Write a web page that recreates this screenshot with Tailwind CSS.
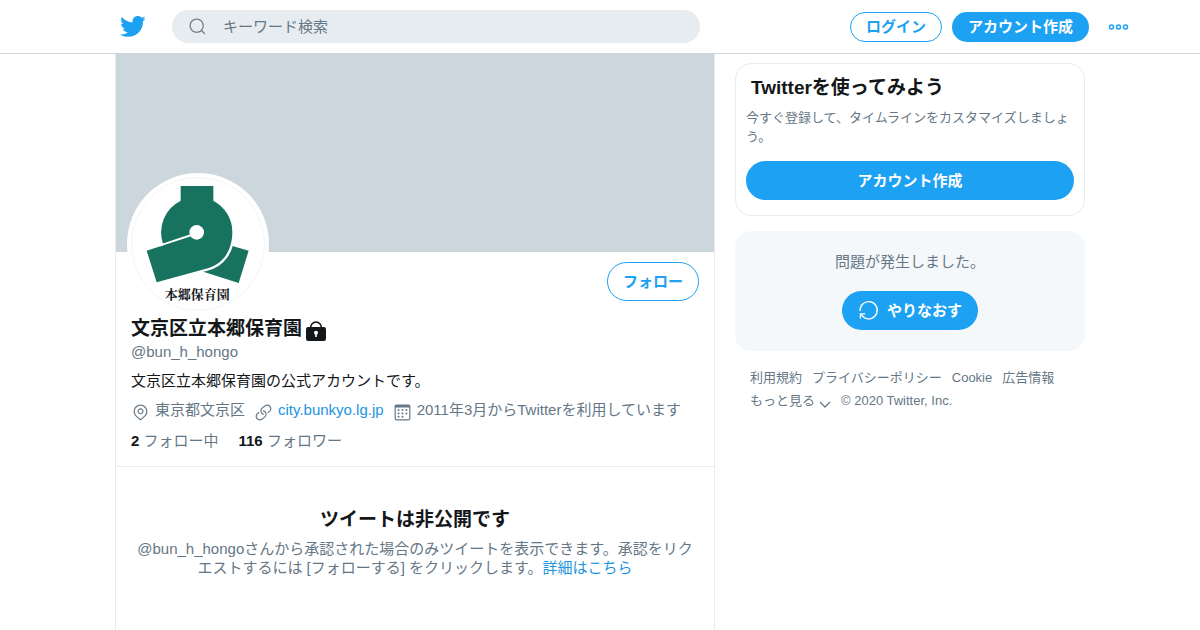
<!DOCTYPE html>
<html lang="ja">
<head>
    <meta charset="UTF-8">
    <meta name="viewport" content="width=device-width, initial-scale=1.0">
    <title>文京区立本郷保育園 (@bun_h_hongo) / Twitter</title>
    <script src="https://cdn.jsdelivr.net/npm/@tailwindcss/browser@4"></script>
</head>
<body class="min-h-screen flex flex-col bg-white text-[#14171a] text-[15px] leading-[19px] font-['Liberation_Sans','Noto_Sans_CJK_JP',sans-serif]">
    <header class="border-b border-[#ccd6dd]">
        <div class="max-w-[970px] h-[53px] mx-auto flex items-center">
            <a href="#" aria-label="Twitter" class="ml-1 mr-[26px] shrink-0">
                <svg class="size-[27px] fill-[#1da1f2]" viewBox="0 0 24 24"><path d="M23.643 4.937c-.835.37-1.732.62-2.675.733.962-.576 1.7-1.49 2.048-2.578-.9.534-1.897.922-2.958 1.13-.85-.904-2.06-1.47-3.4-1.47-2.572 0-4.658 2.086-4.658 4.66 0 .364.042.718.12 1.06-3.873-.195-7.304-2.05-9.602-4.868-.4.69-.63 1.49-.63 2.342 0 1.616.823 3.043 2.072 3.878-.764-.025-1.482-.234-2.11-.583v.06c0 2.257 1.605 4.14 3.737 4.568-.392.106-.803.162-1.227.162-.3 0-.593-.028-.877-.082.593 1.85 2.313 3.198 4.352 3.234-1.595 1.25-3.604 1.995-5.786 1.995-.376 0-.747-.022-1.112-.065 2.062 1.323 4.51 2.093 7.14 2.093 8.57 0 13.255-7.098 13.255-13.254 0-.2-.005-.402-.014-.602.91-.658 1.7-1.477 2.323-2.41z"/></svg>
            </a>
            <label class="flex-1 max-w-[528px] h-[33px] px-4 flex items-center gap-4 rounded-full bg-[#e6ecf0]">
                <svg class="size-[19px] shrink-0 fill-[#657786]" viewBox="0 0 24 24"><path d="M21.53 20.47l-3.66-3.66C19.195 15.24 20 13.214 20 11c0-4.97-4.03-9-9-9s-9 4.03-9 9 4.03 9 9 9c2.215 0 4.24-.804 5.808-2.13l3.66 3.66c.147.146.34.22.53.22s.385-.073.53-.22c.295-.293.295-.767.002-1.06zM3.5 11c0-4.135 3.365-7.5 7.5-7.5s7.5 3.365 7.5 7.5-3.365 7.5-7.5 7.5-7.5-3.365-7.5-7.5z"/></svg>
                <input type="text" aria-label="キーワード検索" placeholder="キーワード検索" class="w-full outline-none placeholder:text-[#657786]">
            </label>
            <div class="ml-auto -mr-11 flex items-center shrink-0">
                <button class="h-[30px] px-[15px] rounded-full border border-[#1da1f2] text-[#1da1f2] font-bold">ログイン</button>
                <button class="h-[30px] ml-[10px] px-4 rounded-full bg-[#1da1f2] text-white font-bold">アカウント作成</button>
                <button aria-label="もっと見る" class="ml-[19px]">
                    <svg class="w-[21px] h-2 fill-none stroke-[#1da1f2]" stroke-width="1.5" viewBox="0 0 21 8"><circle cx="3.5" cy="4" r="2"/><circle cx="10.5" cy="4" r="2"/><circle cx="17.5" cy="4" r="2"/></svg>
                </button>
            </div>
        </div>
    </header>

    <div class="w-full max-w-[970px] mx-auto flex-1 flex gap-5">
        <main class="flex-1 border-x border-[#e6ecf0]">
            <div class="h-[198px] bg-[#ccd6dd]"></div>
            <section class="px-[15px] pb-4 border-b border-[#e6ecf0]">
                <div class="h-[60px] flex items-start justify-between">
                    <svg class="size-[142px] -mt-[79px] -ml-1" viewBox="21 24 426 426" role="img" aria-label="本郷保育園">
                        <circle cx="234" cy="237" r="213" fill="#fff"/>
                        <circle cx="234" cy="237" r="199" fill="none" stroke="#f3f5f6" stroke-width="3"/>
                        <g fill="#17725f">
                            <path d="M325 239L386 257L356 354L243 318Z"/>
                            <path stroke="#fff" stroke-width="14" d="M230 202H337C337 256 309 300 258 311L230 318Z"/>
                            <path d="M129 237A107 107 0 0 1 182 107V63H280V107A107 107 0 0 1 337 202C337 256 309 300 258 311L110 352L80 257L130 241Z"/>
                        </g>
                        <path d="M118 242L215 210" stroke="#fff" stroke-width="6"/>
                        <circle cx="230" cy="202" r="22" fill="#fff"/>
                        <text x="232" y="403" text-anchor="middle" font-size="39" font-weight="700" fill="#14171a" font-family="'Noto Serif CJK JP','Noto Sans CJK JP',serif">本郷保育園</text>
                    </svg>
                    <button class="h-[39px] mt-[10px] px-[15px] rounded-full border border-[#1da1f2] text-[#1da1f2] font-bold">フォロー</button>
                </div>
                <h1 class="h-[30px] pt-1 flex items-center gap-1 text-[19px] leading-6 font-bold">文京区立本郷保育園
                    <svg class="size-[22px] mt-1 -ml-px" viewBox="0 0 22 22"><path d="M5.500 8a5.500 6 0 0 1 11 0" fill="none" stroke="#14171a" stroke-width="1.600"/><rect x="1" y="7" width="20" height="14" rx="2.200" fill="#14171a"/><circle cx="11" cy="12.700" r="2" fill="#fff"/><path d="M10.200 13h1.600v4h-1.600z" fill="#fff"/></svg>
                </h1>
                <p class="text-[#657786]">@bun_h_hongo</p>
                <p class="mt-[10px]">文京区立本郷保育園の公式アカウントです。</p>
                <div class="mt-[10px] flex flex-wrap gap-x-[9px] text-[#657786]">
                    <span class="flex gap-[5px]">
                        <svg class="size-[19px] mt-[3px] fill-current" viewBox="0 0 24 24"><path d="M12 14.315c-2.088 0-3.787-1.698-3.787-3.786S9.913 6.74 12 6.74s3.787 1.7 3.787 3.787-1.7 3.785-3.787 3.785zm0-6.073c-1.26 0-2.287 1.026-2.287 2.287S10.74 12.814 12 12.814s2.287-1.025 2.287-2.286S13.26 8.24 12 8.24z"/><path d="M20.692 10.69C20.692 5.9 16.792 2 12 2s-8.692 3.9-8.692 8.69c0 1.902.603 3.708 1.743 5.223l.003-.002.007.015c1.628 2.07 6.278 5.757 6.475 5.912.138.11.302.163.465.163.163 0 .327-.053.465-.162.197-.155 4.847-3.84 6.475-5.912l.007-.014.002.002c1.14-1.516 1.742-3.32 1.742-5.223zM12 20.29c-1.224-.99-4.52-3.715-5.756-5.285-.94-1.25-1.436-2.742-1.436-4.312C4.808 6.727 8.035 3.5 12 3.5s7.192 3.226 7.192 7.19c0 1.57-.497 3.062-1.436 4.313-1.236 1.57-4.532 4.294-5.756 5.285z"/></svg>
                        東京都文京区
                    </span>
                    <span class="flex gap-[5px]">
                        <svg class="size-[19px] mt-[3px] fill-current" viewBox="0 0 24 24"><path d="M11.96 14.945c-.067 0-.136-.01-.203-.027-1.13-.318-2.097-.986-2.795-1.932-.832-1.125-1.176-2.508-.968-3.893s.942-2.605 2.068-3.438l3.53-2.608c2.322-1.716 5.61-1.224 7.33 1.1.83 1.127 1.175 2.51.967 3.895s-.943 2.605-2.07 3.438l-1.48 1.094c-.333.246-.804.175-1.05-.158-.246-.334-.176-.804.158-1.05l1.48-1.095c.803-.592 1.327-1.463 1.476-2.45.148-.988-.098-1.975-.69-2.778-1.225-1.656-3.572-2.01-5.23-.784l-3.53 2.608c-.802.593-1.326 1.464-1.475 2.45-.15.99.097 1.975.69 2.778.498.675 1.187 1.15 1.992 1.377.4.114.633.528.52.928-.092.33-.394.547-.722.547z"/><path d="M7.27 22.054c-1.61 0-3.197-.735-4.225-2.125-.832-1.127-1.176-2.51-.968-3.894s.943-2.605 2.07-3.438l1.478-1.094c.334-.245.805-.175 1.05.158s.177.804-.157 1.05l-1.48 1.095c-.803.593-1.326 1.464-1.475 2.45-.148.99.097 1.975.69 2.778 1.225 1.657 3.57 2.01 5.23.785l3.528-2.608c1.658-1.225 2.01-3.57.785-5.23-.498-.674-1.187-1.15-1.992-1.376-.4-.113-.633-.527-.52-.927.112-.4.528-.63.926-.522 1.13.318 2.096.986 2.794 1.932 1.717 2.324 1.224 5.612-1.1 7.33l-3.53 2.608c-.933.693-2.023 1.026-3.105 1.026z"/></svg>
                        <a href="#" class="text-[#1b95e0]">city.bunkyo.lg.jp</a>
                    </span>
                    <span class="flex gap-[5px]">
                        <svg class="size-[19px] mt-[3px] fill-current" viewBox="0 0 24 24"><path d="M19.708 2H4.292C3.028 2 2 3.028 2 4.292v15.416C2 20.972 3.028 22 4.292 22h15.416C20.972 22 22 20.972 22 19.708V4.292C22 3.028 20.972 2 19.708 2zm.792 17.708c0 .437-.355.792-.792.792H4.292c-.437 0-.792-.355-.792-.792V6.418c0-.437.354-.79.79-.792h15.42c.436 0 .79.355.79.79V19.71z"/><circle cx="7.032" cy="8.75" r="1.285"/><circle cx="7.032" cy="13.156" r="1.285"/><circle cx="16.97" cy="8.75" r="1.285"/><circle cx="16.97" cy="13.156" r="1.285"/><circle cx="12" cy="8.75" r="1.285"/><circle cx="12" cy="13.156" r="1.285"/><circle cx="7.032" cy="17.486" r="1.285"/><circle cx="12" cy="17.486" r="1.285"/></svg>
                        2011年3月からTwitterを利用しています
                    </span>
                </div>
                <div class="mt-[9px] flex gap-5 text-[#657786]">
                    <a href="#"><b class="text-[#14171a]">2</b> フォロー中</a>
                    <a href="#"><b class="text-[#14171a]">116</b> フォロワー</a>
                </div>
            </section>
            <section class="px-5 pt-[41px] text-center">
                <h2 class="text-[19px] leading-6 font-bold">ツイートは非公開です</h2>
                <p class="mt-[7px] text-[#657786]">@bun_h_hongoさんから承認された場合のみツイートを表示できます。承認をリクエストするには [フォローする] をクリックします。<a href="#" class="text-[#1b95e0]">詳細はこちら</a></p>
            </section>
        </main>

        <aside class="w-[350px] shrink-0 pt-[9px]">
            <section class="px-[10px] pt-3 pb-[15px] rounded-2xl border border-[#e6ecf0]">
                <h2 class="px-[5px] text-[19px] leading-6 font-bold">Twitterを使ってみよう</h2>
                <p class="mt-2 text-[13px] text-[#657786]">今すぐ登録して、タイムラインをカスタマイズしましょう。</p>
                <button class="w-full h-[39px] mt-[15px] rounded-full bg-[#1da1f2] text-white font-bold">アカウント作成</button>
            </section>
            <section class="mt-[15px] py-[21px] flex flex-col items-center gap-5 rounded-2xl bg-[#f5f8fa] text-[#657786]">
                <p>問題が発生しました。</p>
                <button class="h-[39px] px-4 flex items-center gap-2 rounded-full bg-[#1da1f2] text-white font-bold">
                    <svg class="size-[21px] fill-none stroke-white" stroke-width="1.400" viewBox="0 0 22 22"><path d="M2.200 11.500A9 9 0 1 1 6.500 18.400L2.500 15M2.500 19.500V14.500H7.500"/></svg>
                    やりなおす
                </button>
            </section>
            <footer class="px-[15px] pt-[17px] flex flex-wrap gap-x-[10px] gap-y-1 text-[13px] text-[#657786]">
                <a href="#">利用規約</a>
                <a href="#">プライバシーポリシー</a>
                <a href="#">Cookie</a>
                <a href="#">広告情報</a>
                <button class="flex items-center gap-1">もっと見る
                    <svg class="w-3 h-[7px] mt-2 fill-none stroke-current" stroke-width="1.300" viewBox="0 0 12 7"><path d="M1 1l5 5 5-5"/></svg>
                </button>
                <span>© 2020 Twitter, Inc.</span>
            </footer>
        </aside>
    </div>
</body>
</html>
